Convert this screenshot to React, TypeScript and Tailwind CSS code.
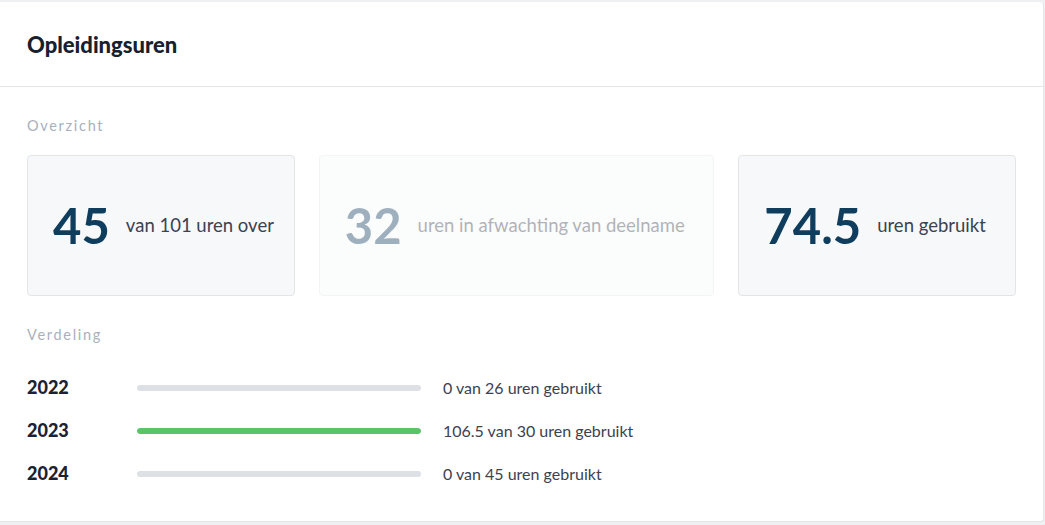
import React from "react";

const font = { fontFamily: "Lato, 'Noto Sans', sans-serif" };

function StatCard({ value, label, width, dim }: { value: string; label: string; width: string; dim?: boolean }) {
  return (
    <div
      className={`${width} h-[141px] flex items-center pl-[25px] rounded-[4px] border border-[#e3e5e9] bg-[#f7f8fa] ${dim ? "opacity-40" : ""}`}
    >
      <span className="text-[49px] leading-none font-bold text-[#0f3d5e]">{value}</span>
      <span className="ml-[16px] text-[18.5px] text-[#3b4250]">{label}</span>
    </div>
  );
}

const rows = [
  { year: "2022", pct: 0, text: "0 van 26 uren gebruikt" },
  { year: "2023", pct: 100, text: "106.5 van 30 uren gebruikt" },
  { year: "2024", pct: 0, text: "0 van 45 uren gebruikt" },
];

export default function App() {
  return (
    <div className="w-[1045px] h-[525px] bg-[#eff0f2] pt-[2px]" style={font}>
      <div className="w-[1044px] h-[520px] bg-white rounded-r-[4px] border-r border-b border-[#e4e6ea]">
        <div className="h-[85px] flex items-center px-[27px] border-b border-[#e3e5e8]">
          <h1 className="text-[22px] font-black text-[#17202f]">Opleidingsuren</h1>
        </div>
        <div className="px-[27px] pt-[29px]">
          <div className="text-[14.5px] leading-[20px] tracking-[1.7px] text-[#a9b0bd]">Overzicht</div>
          <div className="mt-[19px] flex gap-[24px]">
            <StatCard value="45" label="van 101 uren over" width="w-[268px]" />
            <StatCard value="32" label="uren in afwachting van deelname" width="w-[396px]" dim />
            <StatCard value="74.5" label="uren gebruikt" width="w-[278px]" />
          </div>
          <div className="mt-[29px] text-[14.5px] leading-[20px] tracking-[1.7px] text-[#a9b0bd]">Verdeling</div>
          <div className="mt-[21px]">
            {rows.map((r) => (
              <div key={r.year} className="h-[43px] flex items-center">
                <div className="w-[110px] text-[18px] font-black text-[#1b2233]">{r.year}</div>
                <div className="w-[284px] h-[6px] rounded-full bg-[#dde1e5] overflow-hidden">
                  <div className="h-full rounded-full bg-[#5ac568]" style={{ width: `${r.pct}%` }} />
                </div>
                <div className="ml-[22px] text-[16px] text-[#3b4250]">{r.text}</div>
              </div>
            ))}
          </div>
        </div>
      </div>
    </div>
  );
}
